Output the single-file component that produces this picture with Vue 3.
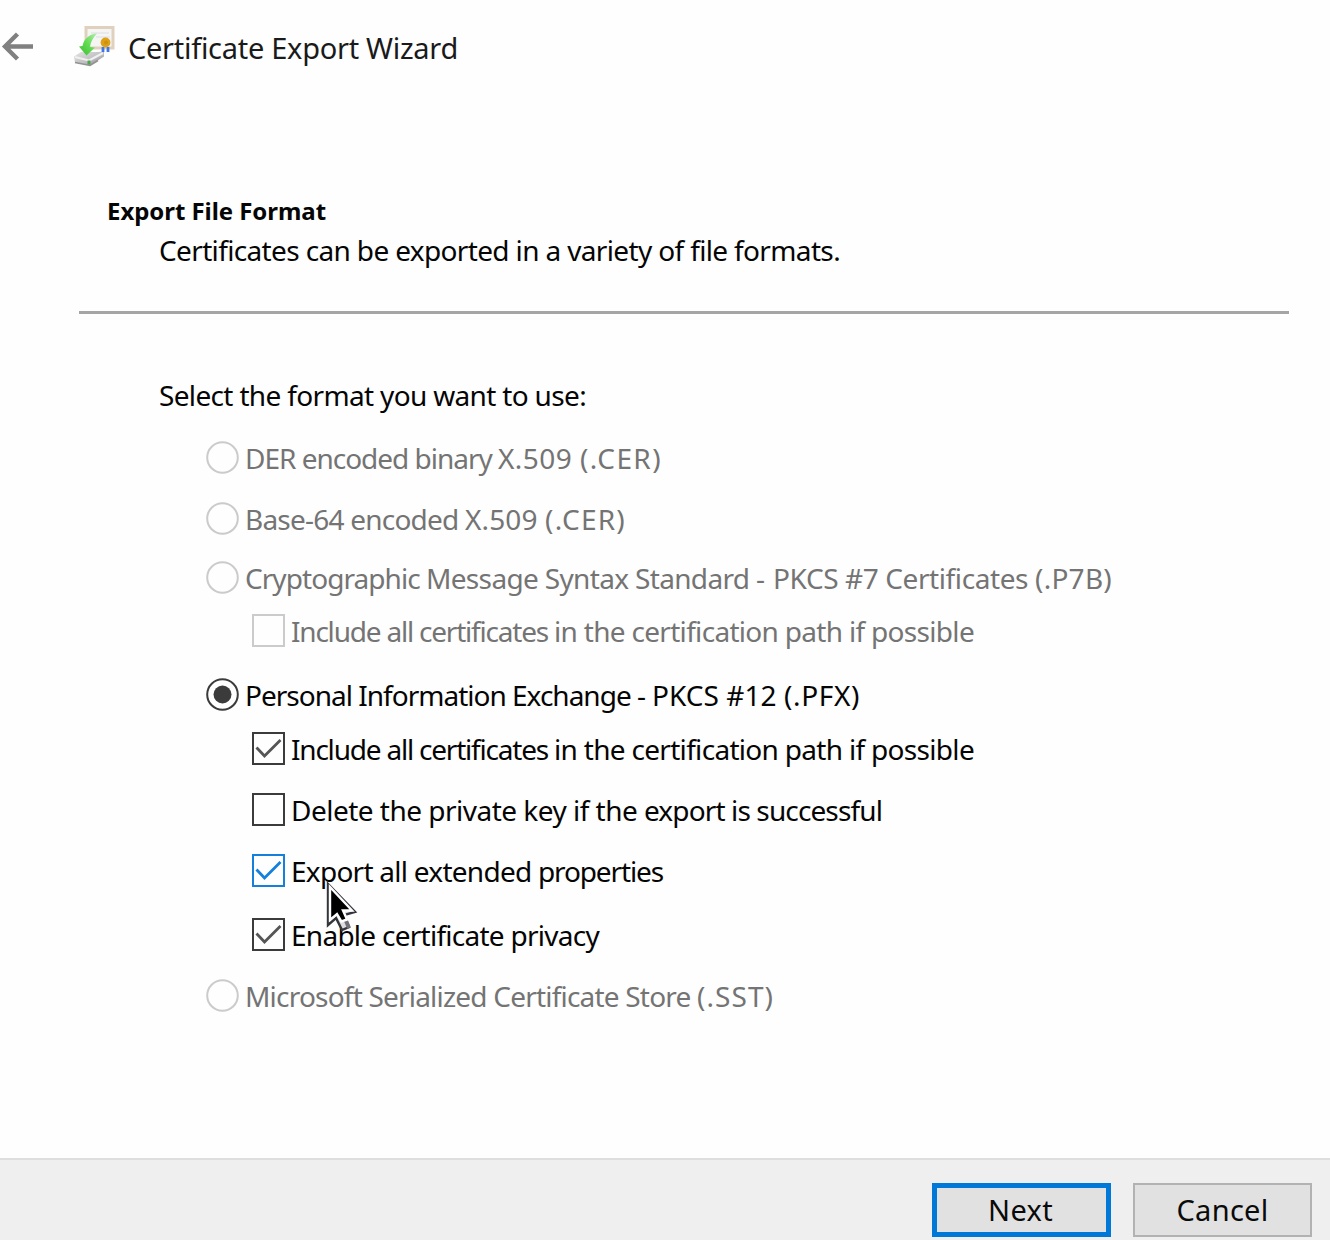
<script setup>
// Each label is a list of [text, width] runs.
const include = [
  ['Include all certificates ', 263],
  ['in the certification path if possible', 420]
]
const options = [
  { label: [['DER encoded binary ', 253], ['X.509 ', 82], ['(.CER)', 82]], type: 'radio', disabled: true, gap: 0 },
  { label: [['Base-64 encoded ', 220], ['X.509 ', 80], ['(.CER)', 81]], type: 'radio', disabled: true, gap: 28 },
  { label: [['Cryptographic ', 181], ['Message Syntax Standard ', 330], ['- ', 17], ['PKCS #7 Certificates ', 262], ['(.P7B)', 77]], type: 'radio', disabled: true, gap: 26 },
  { label: include, type: 'check', disabled: true, gap: 20 },
  { label: [['Personal Information Exchange ', 392], ['- ', 15], ['PKCS #12 ', 132], ['(.PFX)', 76]], type: 'radio', checked: true, gap: 31 },
  { label: include, type: 'check', checked: true, gap: 21 },
  { label: [['Delete the private key if the ', 353], ['export is successful', 238]], type: 'check', gap: 28 },
  { label: [['Export all extended ', 247], ['properties', 125]], type: 'check', checked: true, hot: true, gap: 28 },
  { label: [['Enable certificate privacy', 308]], type: 'check', checked: true, gap: 31 },
  { label: [['Microsoft Serialized Certificate Store ', 452], ['(.SST)', 77]], type: 'radio', disabled: true, gap: 28 }
]

// Spreads the letters of a run so that it fills the given width.
const vFit = {
  mounted(el, { value }) {
    const natural = el.getBoundingClientRect().width
    el.style.letterSpacing = `${(value - natural) / el.textContent.length}px`
  }
}
</script>

<template>
  <main class="wizard">
    <header class="titlebar">
      <svg class="back" width="34" height="32" viewBox="0 0 34 32">
        <path d="M33 16.500H5M17.500 4 5 16.500l12.500 12.500" fill="none" stroke="#808080" stroke-width="4.400" />
      </svg>
      <svg class="logo" width="44" height="44" viewBox="0 0 44 44">
        <defs>
          <linearGradient id="arrow" x1="1" y1="0" x2="0" y2="1">
            <stop offset="0" stop-color="#b5efad" />
            <stop offset=".5" stop-color="#5fdc50" />
            <stop offset="1" stop-color="#3fb936" />
          </linearGradient>
          <linearGradient id="drive" x1="0" y1="0" x2="1" y2="1">
            <stop offset="0" stop-color="#e6e6e6" />
            <stop offset=".6" stop-color="#bdbdc0" />
            <stop offset="1" stop-color="#707073" />
          </linearGradient>
        </defs>
        <rect x="14" y="3.500" width="27" height="20.500" fill="#f5f5f4" stroke="#dfd1be" stroke-width="3" />
        <path d="M19 9h18M24 13h14" stroke="#e3e5e8" stroke-width="1.500" />
        <path d="M2 32.500 9 28h16l7-.5v5L18 41.500 3 38.500Z" fill="url(#drive)" />
        <path d="m3 33 14 3.500L31 29" fill="none" stroke="#f0f0f0" stroke-width="2" />
        <path d="M3 38.500 18 41.500l8-5" fill="none" stroke="#929295" stroke-width="1.600" />
        <path d="M15.500 36.500h3v4h-3z" fill="#4da94b" />
        <path d="M25 9.500C18 10 12 14 10.500 22L7 22.500l7.500 9 8.500-8-5-.5c.5-5 3-9 7-13.500Z" fill="url(#arrow)" />
        <path d="M31 23v5M36 23v5" stroke="#3f78e5" stroke-width="2.800" />
        <circle cx="33.500" cy="18.500" r="4.900" fill="#dda017" />
        <circle cx="34" cy="18.500" r="2" fill="#d18f10" />
      </svg>
      <h1 class="title"><span v-fit="330">Certificate Export Wizard</span></h1>
    </header>

    <section class="intro">
      <h2 class="heading"><span v-fit="219">Export File Format</span></h2>
      <p class="description"><span v-fit="681">Certificates can be exported in a variety of file formats.</span></p>
    </section>

    <section class="content">
      <p class="prompt"><span v-fit="427">Select the format you want to use:</span></p>
      <div
        v-for="(option, i) in options"
        :key="i"
        class="option"
        :class="[option.type, { disabled: option.disabled, hot: option.hot }]"
        :style="{ marginTop: option.gap + 'px' }"
      >
        <svg class="mark" width="33" height="33" viewBox="0 0 33 33" fill="none" stroke="currentColor">
          <template v-if="option.type === 'radio'">
            <circle cx="16.500" cy="16.500" r="15.300" stroke-width="2" />
            <circle v-if="option.checked" cx="16.500" cy="16.500" r="9" fill="currentColor" stroke="none" />
          </template>
          <template v-else>
            <rect x="1" y="1" width="31" height="31" stroke-width="2" />
            <path v-if="option.checked" class="tick" d="M4.500 15.500 12.500 24 28.500 8" stroke-width="2.800" />
          </template>
        </svg>
        <span class="label"><span v-for="([text, width], n) in option.label" :key="n" v-fit="width">{{ text }}</span></span>
        <svg v-if="option.hot" class="cursor" width="36" height="54" viewBox="0 0 36 54">
          <path d="M2 2v41l8-7 6 12 7-3-5-12 11-3Z" fill="#dedede" stroke="#34343d" stroke-width="2.400" />
          <path d="M18 34l5 12" stroke="#70707a" stroke-width="4" />
          <path d="M4 5v33l7-6 4.500 7.500 5.500-2-4-9h9Z" fill="#000" stroke="#fff" stroke-width="2.400" />
        </svg>
      </div>
    </section>

    <footer class="actions">
      <button class="button primary"><span v-fit="65">Next</span></button>
      <button class="button"><span v-fit="92">Cancel</span></button>
    </footer>
  </main>
</template>

<style>
body {
  margin: 0;
  overflow: hidden;
}
</style>

<style scoped>
.wizard {
  box-sizing: border-box;
  width: 1330px;
  height: 1240px;
  display: flex;
  flex-direction: column;
  background: #fefefe;
  color: #050505;
  font: 28px/33px "Noto Sans", "Open Sans", sans-serif;
  white-space: pre;
  overflow: hidden;
}
h1, h2, p {
  margin: 0;
}
svg {
  display: block;
  flex: none;
}
.titlebar {
  height: 68px;
  padding-top: 24px;
  box-sizing: border-box;
  display: flex;
  align-items: flex-start;
}
.back {
  margin-top: 6px;
}
.logo {
  margin-left: 38px;
}
.title {
  margin: 4px 0 0 12px;
  font-size: 29px;
  line-height: 40px;
  font-weight: 400;
  color: #1a1a1a;
}
.intro {
  height: 243px;
  margin: 0 41px 0 79px;
  padding: 126px 0 0 28px;
  box-sizing: border-box;
}
.heading {
  font-size: 24px;
  line-height: 33px;
  font-weight: 700;
}
.description {
  margin: 7px 0 0 52px;
}
.content {
  flex: 1;
  margin: 0 41px 0 79px;
  padding: 65px 0 0 127px;
  border-top: 3px solid #a5a5a5;
}
.prompt {
  margin: 0 0 29px -47px;
}
.option {
  position: relative;
  display: flex;
  gap: 6px;
  height: 33px;
  color: #050505;
}
.check {
  margin-left: 46px;
}
.mark {
  color: #3b3b3b;
}
.tick {
  color: #555;
  stroke: currentColor;
}
.disabled {
  color: #747474;
}
.disabled .mark {
  color: #cbcbcb;
}
.hot .mark,
.hot .tick {
  color: #1580dc;
}
.label {
  padding-top: 1px;
}
.cursor {
  position: absolute;
  left: 74px;
  top: 28px;
  z-index: 1;
}
.actions {
  height: 82px;
  box-sizing: border-box;
  padding: 23px 18px 0 0;
  display: flex;
  justify-content: flex-end;
  gap: 22px;
  background: #efefef;
  border-top: 2px solid #dedede;
}
.button {
  width: 179px;
  height: 54px;
  padding: 0;
  box-sizing: border-box;
  border: 2px solid #b2b2b2;
  background: #e1e1e1;
  color: #0a0a0a;
  font: 29px/40px "Noto Sans", sans-serif;
}
.primary {
  border: 5px solid #0078d7;
  padding-right: 2px;
}
</style>
